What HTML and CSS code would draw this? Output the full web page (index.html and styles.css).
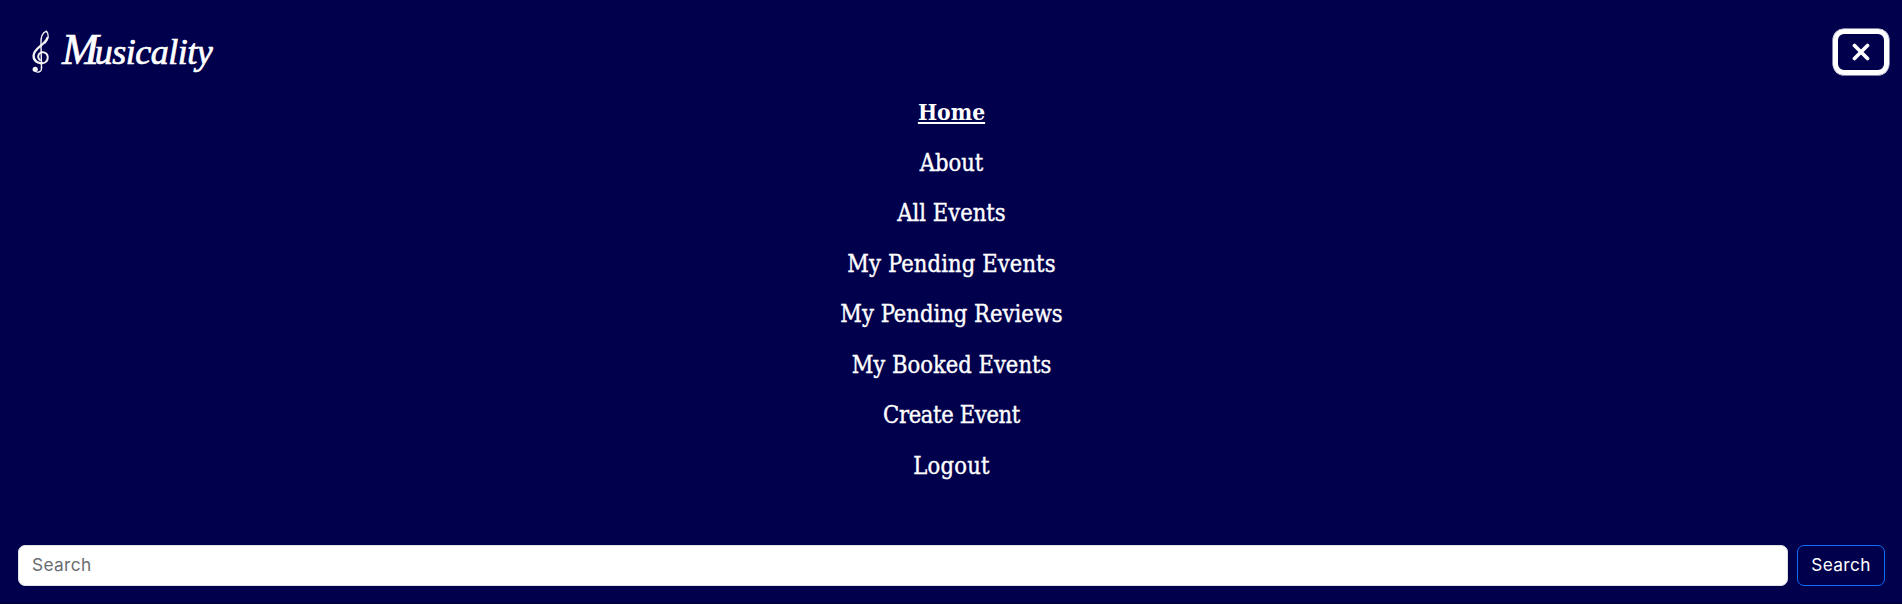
FILE: index.html
```html
<!DOCTYPE html>
<html lang="en">
<head>
<meta charset="utf-8">
<title>Musicality</title>
<link rel="stylesheet" href="styles.css">
</head>
<body>
<header class="navbar">
  <div class="top">
    <a class="brand"><svg class="clef" viewBox="0 0 18 44" width="18" height="44"><g fill="none" stroke="#f4f4f4" stroke-linecap="round"><path d="M9.500 38 L9 14 C8.500 7 11 2.500 14.500 1.200 C17 4 17 9 13 13" stroke-width="1.400"/><path d="M15.300 8 C13 15 2 18 1.600 25.500 C1.300 31 6 33.500 10 33" stroke-width="2.300"/><path d="M8 33.200 C13 34 16.200 31 15.700 26.500 C15 22 9.500 21 7 24 C5.500 26.500 6.300 29 8 30" stroke-width="1.900"/><path d="M9.500 37 C10 42 6 43 3.500 41.500" stroke-width="1.300"/></g><circle cx="3.200" cy="39.300" r="2.600" fill="#f4f4f4"/></svg><span class="name"><span class="cap">M</span>usicality</span></a>
    <button class="toggler" aria-label="Close menu"><svg viewBox="0 0 18 18" width="18" height="18"><path d="M2.500 2.500 L15.500 15.500 M15.500 2.500 L2.500 15.500" stroke="#fff" stroke-width="3.700" stroke-linecap="round"/></svg></button>
  </div>
  <nav class="menu">
    <a class="link active">Home</a>
    <a class="link">About</a>
    <a class="link">All Events</a>
    <a class="link pending">My Pending Events</a>
    <a class="link">My Pending Reviews</a>
    <a class="link">My Booked Events</a>
    <a class="link create">Create Event</a>
    <a class="link logout">Logout</a>
  </nav>
  <form class="search">
    <input class="field" type="text" placeholder="Search">
    <button class="submit" type="button">Search</button>
  </form>
</header>
</body>
</html>
```
FILE: styles.css
```css
* { box-sizing: border-box; }
body { margin: 0; background: #00004d; color: #fff; overflow: hidden; }
.navbar { height: 604px; display: flex; flex-direction: column; background: #00004d; border-bottom: 1px solid #000033; }
.top { height: 85px; flex: none; padding: 28px 13px 0 32px; display: flex; justify-content: space-between; align-items: flex-start; }
.brand { display: flex; align-items: flex-start; gap: 12px; margin-top: 2px; }
.name { font: italic 36px/44px "Liberation Serif", serif; letter-spacing: -0.5px; -webkit-text-stroke: 0.7px #fff; }
.cap { font-size: 44px; line-height: 1px; letter-spacing: -4px; }
.toggler { width: 56px; height: 46px; margin-top: 1px; padding: 0; border: 5px solid #fff; border-radius: 11px; box-shadow: 0 0 0 0.5px #fff; background: none; display: flex; align-items: center; justify-content: center; }
.menu { height: 460px; flex: none; display: flex; flex-direction: column; align-items: center; padding: 2px 0 0 1px; }
.link { height: 50.56px; font: 23.5px/50.56px "DejaVu Serif Condensed", "DejaVu Serif", serif; font-stretch: condensed; white-space: nowrap; -webkit-text-stroke: 0.35px #fff; }
.active { font-size: 22.6px; font-weight: bold; text-decoration: underline; text-decoration-thickness: 2px; text-underline-offset: 2px; -webkit-text-stroke: 0; }
.pending { letter-spacing: 0.1px; }
.create { letter-spacing: -0.35px; }
.logout { letter-spacing: 0.2px; }
.search { display: flex; gap: 9px; padding: 0 17px 0 18px; }
.field, .submit { height: 41px; border-radius: 7px; font: 17.3px Inter, sans-serif; letter-spacing: 0.35px; padding: 0 13px 2px; }
.field { flex: 1; border: 1px solid #dee2e6; background: #fff; }
.field::placeholder { color: #696c70; opacity: 1; }
.submit { width: 88px; border: 1px solid #0d6efd; color: #fff; background: none; }
```
